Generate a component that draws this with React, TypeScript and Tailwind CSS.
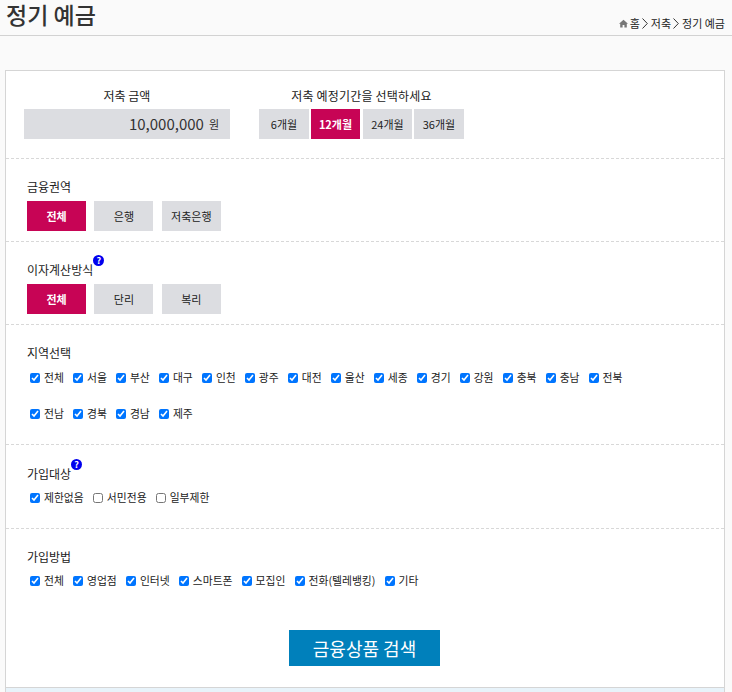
const regions = ["전체", "서울", "부산", "대구", "인천", "광주", "대전", "울산", "세종", "경기", "강원", "충북", "충남", "전북", "전남", "경북", "경남", "제주"];
const methods = ["전체", "영업점", "인터넷", "스마트폰", "모집인", "전화(텔레뱅킹)", "기타"];
const targets: [string, boolean][] = [["제한없음", true], ["서민전용", false], ["일부제한", false]];

function Check({ label, checked = true }: { label: string; checked?: boolean }) {
  return (
    <label className="flex items-center h-[18px] mr-[6.1px] text-[10.8px] leading-[18px] text-[#222]">
      <input type="checkbox" defaultChecked={checked} className="w-[10px] h-[10px] ml-[3px] mr-[4px] accent-[#0075ff]" />
      <span className="-mt-[2px]">{label}</span>
    </label>
  );
}

function Pill({ label, active = false, className = "w-[59px]" }: { label: string; active?: boolean; className?: string }) {
  return (
    <div className={`${className} h-[30px] flex items-center justify-center text-[11px] ${active ? "bg-[#c70455] text-white font-bold" : "bg-[#dcdde1] text-[#222]"}`}>
      {label}
    </div>
  );
}

function Help() {
  return (
    <span className="absolute -top-[6px] -right-[11px] w-[11px] h-[11px] rounded-full bg-[#0000ee] text-white text-[9px] leading-[11px] font-bold text-center">
      ?
    </span>
  );
}

function Label({ text, help = false }: { text: string; help?: boolean }) {
  return (
    <div className="relative w-fit text-[12px] leading-[18px] text-[#222]">
      {text}
      {help && <Help />}
    </div>
  );
}

function PillRow({ items }: { items: string[] }) {
  return (
    <div className="flex gap-[8.4px] mt-[5px]">
      {items.map((t, i) => (
        <Pill key={t} label={t} active={i === 0} />
      ))}
    </div>
  );
}

function Chevron() {
  return (
    <svg width="6" height="11" viewBox="0 0 6 11" className="ml-[2px] mr-[3px]" fill="none" stroke="#333">
      <path d="M0.5 0.5 L5.3 5.5 L0.5 10.5" />
    </svg>
  );
}

export default function App() {
  return (
    <div className="h-[692px] overflow-hidden bg-[#fafafa] font-['Noto_Sans_CJK_KR',sans-serif]">
      <header className="h-[36px] border-b border-[#d2d2d2] flex justify-between pl-[6px] pr-[7px]">
        <h1 className="mt-[1px] text-[23px] leading-[26px] font-medium text-[#333]">정기 예금</h1>
        <div className="flex items-center h-[14px] mt-[16px] text-[11px] text-[#222]">
          <svg width="9" height="9" viewBox="0 0 9 9" className="mr-[2px]" fill="#777">
            <path d="M4.5 0.8 L9 4.8 L7.8 4.8 L7.8 8.5 L5.4 8.5 L5.4 6 L3.6 6 L3.6 8.5 L1.2 8.5 L1.2 4.8 L0 4.8 Z" />
          </svg>
          <span>홈</span>
          <Chevron />
          <span>저축</span>
          <Chevron />
          <span>정기 예금</span>
        </div>
      </header>

      <main className="mt-[34px] ml-[5px] mr-[7px] h-[640px] border border-[#d5d5d5] bg-white">
        <section className="h-[88px] border-b border-dashed border-[#d8d8d8] pl-[18px] pt-[16px] flex">
          <div className="w-[206px]">
            <div className="text-center text-[12px] leading-[18px] text-[#222]">저축 금액</div>
            <div className="mt-[4px] h-[30px] bg-[#dcdde1] flex items-center justify-end pr-[11px] text-[#333]">
              <span className="text-[15px]">10,000,000</span>
              <span className="text-[11px] ml-[5px]">원</span>
            </div>
          </div>
          <div className="ml-[29px] w-[205px]">
            <div className="text-center text-[12px] leading-[18px] text-[#222] tracking-[0.2px]">저축 예정기간을 선택하세요</div>
            <div className="mt-[4px] flex gap-[2px]">
              <Pill label="6개월" className="w-[50px]" />
              <Pill label="12개월" active className="w-[49px]" />
              <Pill label="24개월" className="w-[49px] ml-[1px]" />
              <Pill label="36개월" className="w-[50px]" />
            </div>
          </div>
        </section>

        <section className="h-[83px] border-b border-dashed border-[#d8d8d8] pl-[21px] pt-[19px]">
          <Label text="금융권역" />
          <PillRow items={["전체", "은행", "저축은행"]} />
        </section>

        <section className="h-[83px] border-b border-dashed border-[#d8d8d8] pl-[21px] pt-[19px]">
          <Label text="이자계산방식" help />
          <PillRow items={["전체", "단리", "복리"]} />
        </section>

        <section className="h-[120px] border-b border-dashed border-[#d8d8d8] pl-[21px] pt-[19px]">
          <Label text="지역선택" />
          <div className="mt-[7px] w-[610px] flex flex-wrap gap-y-[18px]">
            {regions.map((r) => (
              <Check key={r} label={r} />
            ))}
          </div>
        </section>

        <section className="h-[84px] border-b border-dashed border-[#d8d8d8] pl-[21px] pt-[20px]">
          <Label text="가입대상" help />
          <div className="mt-[6px] flex">
            {targets.map(([t, c]) => (
              <Check key={t} label={t} checked={c} />
            ))}
          </div>
        </section>

        <section className="pl-[21px] pt-[19px]">
          <Label text="가입방법" />
          <div className="mt-[6px] flex">
            {methods.map((m) => (
              <Check key={m} label={m} />
            ))}
          </div>
          <div className="mt-[40px] ml-[262px] w-[151px] h-[36px] bg-[#0080bb] text-white text-[18px] flex items-center justify-center">
            금융상품 검색
          </div>
        </section>

        <div className="mt-[21px] h-[30px] border-t border-[#d5d5d5] bg-[#e8f3fa]" />
      </main>
    </div>
  );
}
